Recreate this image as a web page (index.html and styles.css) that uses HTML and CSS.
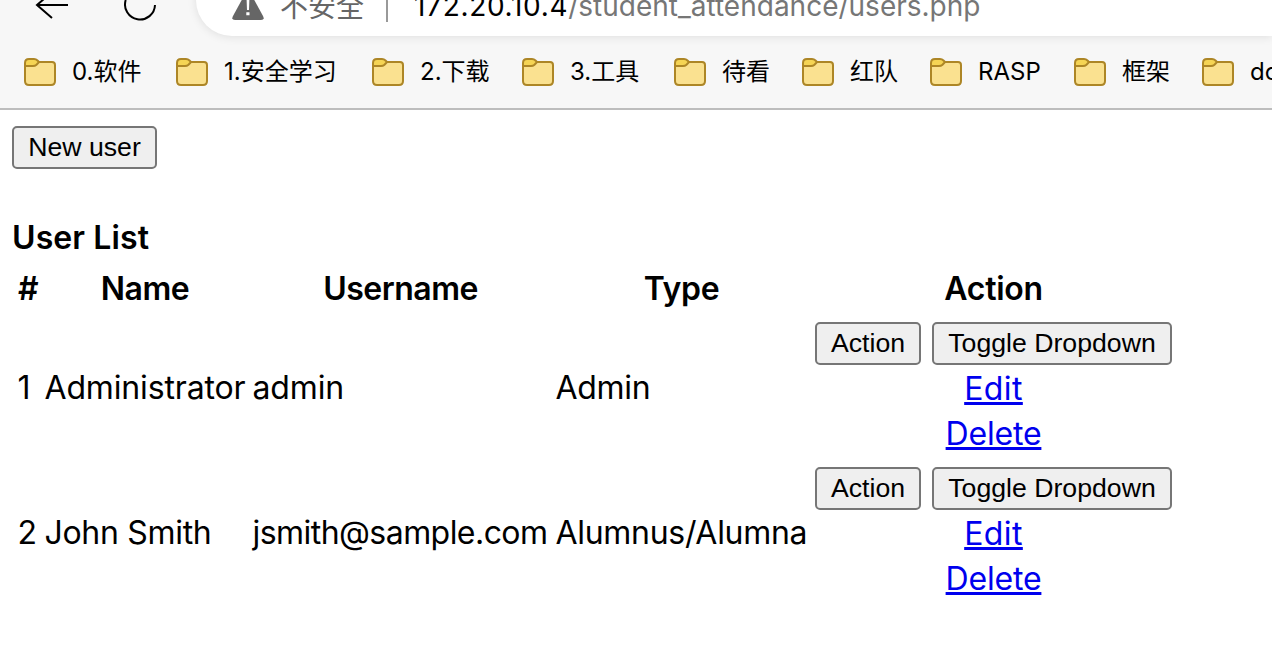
FILE: index.html
```html
<!DOCTYPE html>
<html lang="zh-CN">
<head>
<meta charset="utf-8">
<title>User List</title>
<link rel="stylesheet" href="styles.css">
</head>
<body>
<svg class="defs" width="0" height="0" aria-hidden="true">
  <symbol id="folder" viewBox="0 0 32 28">
    <path d="M1 5Q1 1 5 1H10Q12 1 13.5 2.5L15 4H28Q31 4 31 7V23Q31 27 27 27H5Q1 27 1 23Z" fill="#fae190"/>
    <path d="M1 8V5Q1 1 5 1H10Q12 1 13.5 2.5L15 4L12.5 6.7Q11 8 9 8Z" fill="#f5d454"/>
    <path d="M1 8H9Q11 8 12.5 6.7L15 4M1 5Q1 1 5 1H10Q12 1 13.5 2.5L15 4H28Q31 4 31 7V23Q31 27 27 27H5Q1 27 1 23Z" fill="none" stroke="#ad8626" stroke-width="2"/>
  </symbol>
</svg>
<header class="browser">
  <div class="toolbar">
    <svg class="nav" width="196" height="36" viewBox="0 0 196 36" fill="none" stroke="#000" stroke-width="2">
      <path d="M68 5H37M52 -8L37 5L52 18"/>
      <path d="M125.700 0A15 15 0 1 0 155 5"/>
    </svg>
    <div class="address">
      <svg class="warn" width="34" height="36" viewBox="0 0 34 36">
        <path d="M14-6Q17-11 20-6L32 16Q34 20 30 20H4Q0 20 2 16Z" fill="#666"/>
        <path d="M15.500-3H18.500L18 10H16ZM15.300 12.300H18.500V15.300H15.300Z" fill="#fff"/>
      </svg>
      <span class="insecure">不安全</span>
      <span class="divider"></span>
      <span class="url"><b>172.20.10.4</b>/student_attendance/users.php</span>
    </div>
  </div>
  <nav class="bookmarks">
    <a class="bm w152"><svg><use href="#folder"/></svg>0.软件</a>
    <a class="bm w196"><svg><use href="#folder"/></svg>1.安全学习</a>
    <a class="bm w150"><svg><use href="#folder"/></svg>2.下载</a>
    <a class="bm w152"><svg><use href="#folder"/></svg>3.工具</a>
    <a class="bm w128"><svg><use href="#folder"/></svg>待看</a>
    <a class="bm w128"><svg><use href="#folder"/></svg>红队</a>
    <a class="bm w144"><svg><use href="#folder"/></svg>RASP</a>
    <a class="bm w128"><svg><use href="#folder"/></svg>框架</a>
    <a class="bm w128"><svg><use href="#folder"/></svg>docker</a>
  </nav>
</header>
<main>
  <button class="new">New user</button>
  <h1>User List</h1>
  <table>
    <colgroup><col class="c1"><col class="c2"><col class="c3"><col class="c4"><col class="c5"></colgroup>
    <thead><tr><th>#</th><th>Name</th><th>Username</th><th class="normal">Type</th><th class="normal">Action</th></tr></thead>
    <tbody>
      <tr>
        <td>1</td><td class="name">Administrator</td><td class="name">admin</td><td class="type">Admin</td>
        <td class="actions"><div class="group"><button class="act">Action</button><button class="tog">Toggle Dropdown</button></div><div><a class="edit" href="#">Edit</a></div><div><a class="delete" href="#">Delete</a></div></td>
      </tr>
      <tr>
        <td>2</td><td class="type">John Smith</td><td class="email">jsmith@sample.com</td><td class="type">Alumnus/Alumna</td>
        <td class="actions"><div class="group"><button class="act">Action</button><button class="tog">Toggle Dropdown</button></div><div><a class="edit" href="#">Edit</a></div><div><a class="delete" href="#">Delete</a></div></td>
      </tr>
    </tbody>
  </table>
</main>
</body>
</html>
```
FILE: styles.css
```css
* { box-sizing: border-box; }
body {
  margin: 0;
  height: 666px;
  overflow: hidden;
  background: #fff;
  color: #000;
  font: 32px/45px Inter, "Noto Sans CJK SC", sans-serif;
}
.defs { display: block; height: 0; }
.browser {
  height: 110px;
  background: #f7f7f7;
  border-bottom: 2px solid #bdbdbd;
  overflow: hidden;
}
.toolbar { display: flex; height: 36px; }
.nav { flex: none; }
.address {
  flex: 1;
  display: flex;
  height: 72px;
  margin-top: -36px;
  padding: 36px 0 0 35px;
  background: #fff;
  border-radius: 36px 0 0 36px;
  box-shadow: 0 1px 10px rgba(0, 0, 0, .1);
  white-space: nowrap;
}
.warn { flex: none; }
.insecure {
  width: 104px;
  margin: -15px 0 0 15px;
  font: 28px/40px "Noto Sans CJK SC", sans-serif;
  color: #666;
}
.divider { width: 2px; height: 22px; margin-left: 2px; background: #999; }
.url {
  margin: -14px 0 0 26px;
  font-size: 28px;
  line-height: 40px;
  color: #767676;
}
.url b { font-weight: 400; color: #000; letter-spacing: .7px; }
.bookmarks {
  display: flex;
  height: 72px;
  padding-left: 24px;
  align-items: center;
  font-size: 24px;
  line-height: 36px;
  white-space: nowrap;
}
.bm { display: flex; flex: none; align-items: center; gap: 16px; }
.bm svg { width: 32px; height: 28px; }
.w128 { width: 128px; }
.w144 { width: 144px; }
.w150 { width: 150px; }
.w152 { width: 152px; }
.w196 { width: 196px; }
main { padding: 16px 12px; }
button {
  display: block;
  height: 43px;
  padding: 0;
  border: 2px solid #767676;
  border-radius: 5px;
  background: #efefef;
  color: #000;
  font: 26.667px/37px "Liberation Sans", Arial, sans-serif;
}
.new { width: 145px; }
.act { width: 106px; }
.tog { width: 240px; }
h1 {
  margin: 46px 0 6px;
  font-size: 32px;
  line-height: 45px;
  font-weight: 600;
  letter-spacing: .1px;
}
table {
  width: 1166px;
  table-layout: fixed;
  border-spacing: 4px 4px;
  margin-top: -5px;
}
.c1 { width: 23px; }
.c2 { width: 204px; }
.c3 { width: 299px; }
.c4 { width: 255px; }
.c5 { width: 361px; }
th, td { padding: 2px; white-space: nowrap; }
th {
  height: 49px;
  padding: 1px 2px 3px;
  font-weight: 600;
  text-align: center;
  letter-spacing: -.5px;
}
th.normal { letter-spacing: -.3px; }
td { height: 141px; padding: 1px 2px 3px 1.5px; vertical-align: middle; }
.name { letter-spacing: -.15px; }
.type { letter-spacing: -.3px; }
.email { letter-spacing: -.55px; }
.actions { padding: 2px; text-align: center; }
.group { display: flex; gap: 11px; height: 45px; padding-top: 1px; }
a[href] { color: #0000ee; text-decoration: underline; }
.edit { letter-spacing: .4px; }
.delete { letter-spacing: -.2px; }
```
